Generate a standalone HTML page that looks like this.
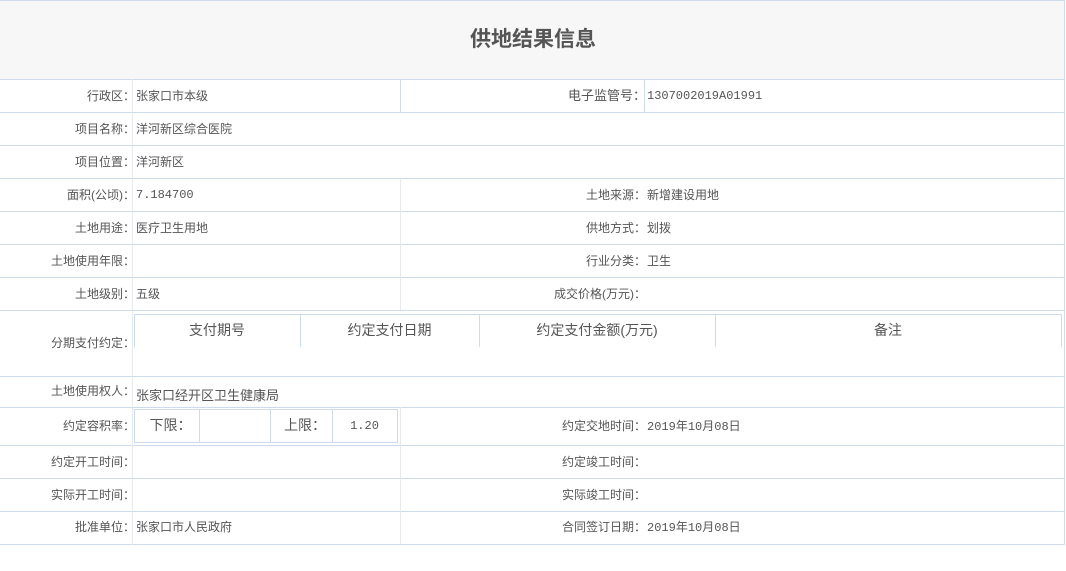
<!DOCTYPE html>
<html><head><meta charset="utf-8"><style>
body{margin:0;width:1066px;height:571px;background:#fff;position:relative;overflow:hidden;font-family:"Liberation Sans","Noto Sans CJK SC",sans-serif;color:#555;font-size:12px}
.a{position:absolute}
.h{position:absolute;left:0;width:1065px;height:1px;background:#cddbea}
.v{position:absolute;width:1px;background:#e6eaee}
.vd{background:#cddbea}
.l{position:absolute;text-align:right;width:135px;left:0;line-height:16px}
.l2{position:absolute;text-align:right;width:246px;left:400px;line-height:16px}
.t{position:absolute;line-height:16px;white-space:nowrap}
.m{font-family:"Liberation Mono","Noto Sans CJK SC",monospace}
</style></head><body>
<div class="a" style="left:0;top:0;width:1065px;height:79px;background:#f7f7f7"></div>
<div class="a" style="left:0;top:27px;width:1066px;text-align:center;font-size:21px;font-weight:bold;color:#555;line-height:26px">供地结果信息</div>
<div class="h" style="top:0"></div>
<div class="h" style="top:79px"></div><div class="h" style="top:112px"></div><div class="h" style="top:145px"></div><div class="h" style="top:178px"></div><div class="h" style="top:211px"></div><div class="h" style="top:244px"></div><div class="h" style="top:277px"></div><div class="h" style="top:310px"></div><div class="h" style="top:376px"></div><div class="h" style="top:407px"></div><div class="h" style="top:445px"></div><div class="h" style="top:478px"></div><div class="h" style="top:511px"></div><div class="h" style="top:544px"></div>
<div class="v vd" style="left:1064px;top:0;height:545px"></div>
<div class="v" style="left:132px;top:79px;height:466px"></div>
<div class="v vd" style="left:400px;top:79px;height:33px"></div>
<div class="v vd" style="left:644px;top:79px;height:33px"></div>
<div class="v" style="left:400px;top:178px;height:132px"></div>
<div class="v" style="left:400px;top:407px;height:137px"></div>

<div class="l" style="top:88px">行政区：</div><div class="t" style="left:136px;top:88px">张家口市本级</div>
<div class="l2" style="top:88px;font-size:13px">电子监管号：</div><div class="t m" style="left:647px;top:88px">1307002019A01991</div>
<div class="l" style="top:121px">项目名称：</div><div class="t" style="left:136px;top:121px">洋河新区综合医院</div>
<div class="l" style="top:154px">项目位置：</div><div class="t" style="left:136px;top:154px">洋河新区</div>
<div class="l" style="top:187px">面积(公顷)：</div><div class="t m" style="left:136px;top:187px">7.184700</div>
<div class="l2" style="top:187px">土地来源：</div><div class="t" style="left:647px;top:187px">新增建设用地</div>
<div class="l" style="top:220px">土地用途：</div><div class="t" style="left:136px;top:220px">医疗卫生用地</div>
<div class="l2" style="top:220px">供地方式：</div><div class="t" style="left:647px;top:220px">划拨</div>
<div class="l" style="top:253px">土地使用年限：</div>
<div class="l2" style="top:253px">行业分类：</div><div class="t" style="left:647px;top:253px">卫生</div>
<div class="l" style="top:286px">土地级别：</div><div class="t" style="left:136px;top:286px">五级</div>
<div class="l2" style="top:286px">成交价格(万元)：</div>
<div class="l" style="top:335px">分期支付约定：</div>
<div class="a" style="left:134px;top:314px;width:928px;height:1px;background:#cddbea"></div>
<div class="v vd" style="left:134px;top:314px;height:33px"></div>
<div class="v vd" style="left:300px;top:314px;height:33px"></div>
<div class="v vd" style="left:479px;top:314px;height:33px"></div>
<div class="v vd" style="left:715px;top:314px;height:33px"></div>
<div class="v vd" style="left:1061px;top:314px;height:33px"></div>
<div class="t" style="left:134px;width:166px;text-align:center;top:322px;font-size:14px">支付期号</div>
<div class="t" style="left:300px;width:179px;text-align:center;top:322px;font-size:14px">约定支付日期</div>
<div class="t" style="left:479px;width:236px;text-align:center;top:322px;font-size:14px">约定支付金额(万元)</div>
<div class="t" style="left:715px;width:346px;text-align:center;top:322px;font-size:14px">备注</div>
<div class="l" style="top:383px">土地使用权人：</div><div class="t" style="left:136px;top:388px;font-size:13px">张家口经开区卫生健康局</div>
<div class="l" style="top:418px">约定容积率：</div>
<div class="a" style="left:134px;top:409px;width:262px;height:32px;border:1px solid #cddbea"></div>
<div class="v vd" style="left:199px;top:409px;height:33px"></div>
<div class="v vd" style="left:270px;top:409px;height:33px"></div>
<div class="v vd" style="left:332px;top:409px;height:33px"></div>
<div class="t" style="left:138px;width:65px;text-align:center;top:417px;font-size:14px">下限：</div>
<div class="t" style="left:274px;width:62px;text-align:center;top:417px;font-size:14px">上限：</div>
<div class="t m" style="left:332px;width:65px;text-align:center;top:418px">1.20</div>
<div class="l2" style="top:418px">约定交地时间：</div><div class="t" style="left:647px;top:418px"><span class="m">2019</span>年<span class="m">10</span>月<span class="m">08</span>日</div>
<div class="l" style="top:454px">约定开工时间：</div>
<div class="l2" style="top:454px">约定竣工时间：</div>
<div class="l" style="top:487px">实际开工时间：</div>
<div class="l2" style="top:487px">实际竣工时间：</div>
<div class="l" style="top:519px">批准单位：</div><div class="t" style="left:136px;top:519px">张家口市人民政府</div>
<div class="l2" style="top:519px">合同签订日期：</div><div class="t" style="left:647px;top:519px"><span class="m">2019</span>年<span class="m">10</span>月<span class="m">08</span>日</div>
</body></html>
